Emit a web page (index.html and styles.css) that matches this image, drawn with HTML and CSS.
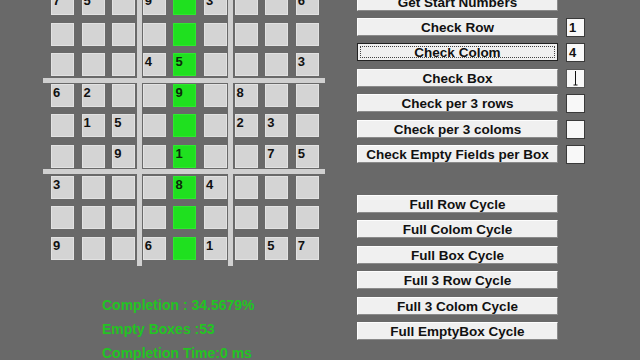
FILE: index.html
```html
<!DOCTYPE html>
<html lang="en">
<head>
    <meta charset="UTF-8">
    <meta name="viewport" content="width=device-width, initial-scale=1.0">
    <title>Sudoku Solver</title>
    <link rel="stylesheet" href="styles.css">
</head>
<body>
    <div class="left">
        <div class="board">
            <div class="grid" id="grid"></div>
            <div class="line hline h1"></div>
            <div class="line hline h2"></div>
            <div class="line vline v1"></div>
            <div class="line vline v2"></div>
        </div>
        <div class="stats">
            <div>Completion : 34.5679%</div>
            <div>Empty Boxes :53</div>
            <div>Completion Time:0 ms</div>
        </div>
    </div>

    <div class="right">
        <div class="row"><button class="btn">Get Start Numbers</button></div>
        <div class="row"><button class="btn">Check Row</button><div class="box">1</div></div>
        <div class="row"><button class="btn focus">Check Colom</button><div class="box">4</div></div>
        <div class="row"><button class="btn">Check Box</button><div class="box caret">
            <svg width="19" height="19" viewBox="0 0 19 19"><path d="M9.5 2v14M7.5 16h4" stroke="#111" stroke-width="1" fill="none"/></svg>
        </div></div>
        <div class="row"><button class="btn">Check per 3 rows</button><div class="box"></div></div>
        <div class="row"><button class="btn">Check per 3 coloms</button><div class="box"></div></div>
        <div class="row"><button class="btn">Check Empty Fields per Box</button><div class="box"></div></div>

        <div class="cycles">
            <div class="row"><button class="btn">Full Row Cycle</button></div>
            <div class="row"><button class="btn">Full Colom Cycle</button></div>
            <div class="row"><button class="btn">Full Box Cycle</button></div>
            <div class="row"><button class="btn">Full 3 Row Cycle</button></div>
            <div class="row"><button class="btn">Full 3 Colom Cycle</button></div>
            <div class="row"><button class="btn">Full EmptyBox Cycle</button></div>
        </div>
    </div>

    <script>
        const puzzle = [
            "75_9_3__6",
            "_________",
            "___45___3",
            "62__9_8__",
            "_15___23_",
            "__9_1__75",
            "3___84___",
            "_________",
            "9__6_1_57"
        ];

        const grid = document.getElementById("grid");
        for (let r = 0; r < 9; r++) {
            for (let c = 0; c < 9; c++) {
                const cell = document.createElement("div");
                cell.className = c === 4 ? "cell green" : "cell";
                const ch = puzzle[r][c];
                cell.textContent = ch === "_" ? "" : ch;
                grid.appendChild(cell);
            }
        }
    </script>
</body>
</html>
```

FILE: styles.css
```css
body {
    margin: 0;
    width: 640px;
    height: 360px;
    overflow: hidden;
    background: #696969;
    font-family: "Liberation Sans", Arial, sans-serif;
    display: flex;
    padding-left: 51px;
    box-sizing: border-box;
}
.left {
    width: 268px;
    margin-top: -8px;
}
.board {
    position: relative;
}
.grid {
    display: grid;
    grid-template-columns: repeat(9, 23px);
    grid-auto-rows: 23px;
    gap: 7.6px;
}
.cell {
    box-sizing: border-box;
    background: #d4d4d4;
    border: 1px solid #e2e2e2;
    font-size: 13px;
    font-weight: bold;
    line-height: 14px;
    padding: 1px 0 0 1px;
    color: #111;
}
.cell.green {
    background: #1fe01f;
    border-color: #2ee82e;
    color: #0c2a0c;
}
.line {
    position: absolute;
    background: #d0d0d0;
}
.hline {
    left: -8px;
    width: 282px;
    height: 5px;
}
.h1 { top: 85.5px; }
.h2 { top: 177.3px; }
.vline {
    top: -20px;
    width: 5px;
    height: 294px;
}
.v1 { left: 85.5px; }
.v2 { left: 177.3px; }
.stats {
    margin-top: 33.6px;
    margin-left: 51px;
    color: #22c422;
    font-size: 14px;
    font-weight: bold;
    line-height: 24px;
    white-space: nowrap;
}
.right {
    margin-left: 38px;
    margin-top: -7.4px;
    display: flex;
    flex-direction: column;
    gap: 7.4px;
}
.row {
    display: flex;
    gap: 8px;
    height: 18px;
}
.btn {
    box-sizing: border-box;
    width: 201px;
    height: 18px;
    margin: 0;
    padding: 0;
    background: #f0f0f0;
    border: 1px solid;
    border-color: #fdfdfd #8a8a8a #8a8a8a #fdfdfd;
    font-family: "Liberation Sans", Arial, sans-serif;
    font-size: 13.5px;
    font-weight: bold;
    line-height: 17px;
    color: #111;
    white-space: nowrap;
}
.btn.focus {
    border-color: #222;
    outline: 1px dotted #444;
    outline-offset: -4px;
}
.box {
    box-sizing: border-box;
    width: 19px;
    height: 19px;
    background: #f8f8f8;
    border: 1px solid #3a3a3a;
    font-size: 13px;
    font-weight: bold;
    line-height: 17px;
    padding-left: 2px;
    color: #111;
}
.box.caret {
    padding: 0;
    border-color: #555;
}
.box.caret svg {
    display: block;
    margin: -1px;
}
.cycles {
    margin-top: 24.6px;
    display: flex;
    flex-direction: column;
    gap: 7.4px;
}
```
